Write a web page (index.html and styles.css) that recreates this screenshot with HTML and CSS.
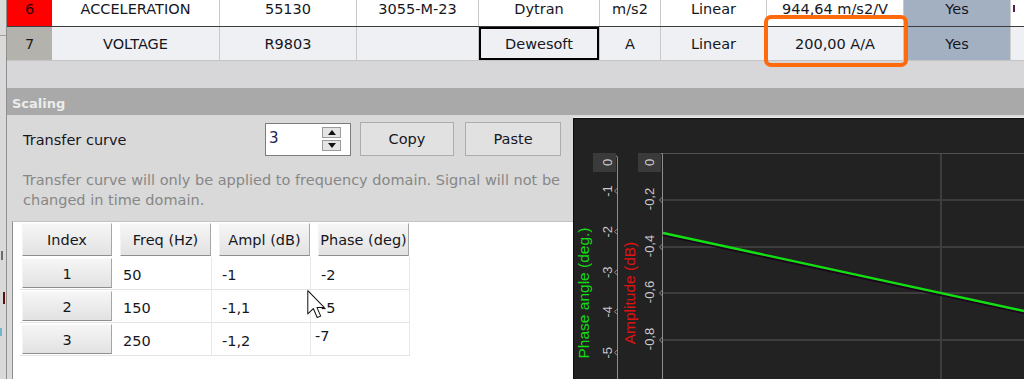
FILE: index.html
```html
<!DOCTYPE html>
<html lang="en">
<head>
<meta charset="utf-8">
<title>Scaling</title>
<link rel="stylesheet" href="styles.css">
</head>
<body>
<div class="screen">
  <div class="backdrop">
    <span class="bk-line"></span>
    <span class="bk-frag frag-a"></span>
    <span class="bk-frag frag-b"></span>
    <span class="bk-frag frag-c"></span>
  </div>
  <div class="main">
    <div class="channels">
      <div class="row row-6">
        <div class="cell num-red">6</div>
        <div class="cell">ACCELERATION</div>
        <div class="cell">55130</div>
        <div class="cell">3055-M-23</div>
        <div class="cell">Dytran</div>
        <div class="cell">m/s2</div>
        <div class="cell">Linear</div>
        <div class="cell">944,64 m/s2/V</div>
        <div class="cell cell-yes">Yes</div>
        <div class="cell cell-rest"><span class="stem"></span></div>
      </div>
      <div class="row row-7">
        <div class="cell num-gray">7</div>
        <div class="cell">VOLTAGE</div>
        <div class="cell">R9803</div>
        <div class="cell"></div>
        <div class="cell cell-focus">Dewesoft</div>
        <div class="cell">A</div>
        <div class="cell">Linear</div>
        <div class="cell">200,00 A/A</div>
        <div class="cell cell-yes">Yes</div>
        <div class="cell cell-rest"></div>
      </div>
    </div>
    <div class="gap"></div>
    <div class="section-head">Scaling</div>
    <div class="section-body">
      <div class="left-pane">
        <div class="controls">
          <span class="label">Transfer curve</span>
          <div class="spin">
            <span class="spin-value">3</span>
            <span class="spin-btns">
              <span class="spin-btn"><span class="tri-up"></span></span>
              <span class="spin-btn"><span class="tri-down"></span></span>
            </span>
          </div>
          <button class="btn btn-copy">Copy</button>
          <button class="btn btn-paste">Paste</button>
        </div>
        <p class="note">Transfer curve will only be applied to frequency domain. Signal will not be<br>changed in time domain.</p>
        <div class="table-box">
          <div class="curve-table">
            <div class="th th-index">Index</div>
            <div class="th">Freq (Hz)</div>
            <div class="th">Ampl (dB)</div>
            <div class="th">Phase (deg)</div>

            <div class="td-index"><span class="rowbtn">1</span></div>
            <div class="td">50</div>
            <div class="td">-1</div>
            <div class="td">-2</div>

            <div class="td-index"><span class="rowbtn">2</span></div>
            <div class="td">150</div>
            <div class="td">-1,1</div>
            <div class="td">-5</div>

            <div class="td-index"><span class="rowbtn">3</span></div>
            <div class="td">250</div>
            <div class="td">-1,2</div>
            <div class="td td-edit">-7</div>
          </div>
        </div>
      </div>
      <div class="chart">
        <svg class="plot" width="450" height="260" viewBox="0 0 450 260">
          <g stroke="#3d3d3d" stroke-width="2">
            <line x1="89" y1="81" x2="450" y2="81"/>
            <line x1="89" y1="128" x2="450" y2="128"/>
            <line x1="89" y1="174" x2="450" y2="174"/>
            <line x1="89" y1="221" x2="450" y2="221"/>
            <line x1="367" y1="35" x2="367" y2="260"/>
          </g>
          <line x1="89" y1="34.5" x2="450" y2="34.5" stroke="#4e4e4e" stroke-width="1"/>
          <g fill="none" stroke="#8e8e8e" stroke-width="1">
            <path d="M86 34.5 H88.5 V260"/>
            <path d="M41 36.5 Q43.5 36.5 43.5 39 V260"/>
            <polyline points="88.5,78 85.5,81 88.5,84"/>
            <polyline points="88.5,125 85.5,128 88.5,131"/>
            <polyline points="88.5,171 85.5,174 88.5,177"/>
            <polyline points="88.5,218 85.5,221 88.5,224"/>
            <polyline points="43.5,69 40.5,72 43.5,75"/>
            <polyline points="43.5,109.7 40.5,112.7 43.5,115.7"/>
            <polyline points="43.5,150.3 40.5,153.3 43.5,156.3"/>
            <polyline points="43.5,189.7 40.5,192.7 43.5,195.7"/>
            <polyline points="43.5,230.7 40.5,233.7 43.5,236.7"/>
          </g>
          <rect x="19" y="34" width="23" height="19" fill="#3a3a3a"/>
          <rect x="64" y="34" width="23" height="19" fill="#3a3a3a"/>
          <g class="tick" text-anchor="middle" dominant-baseline="central">
            <text transform="translate(33,43.5) rotate(-90)">0</text>
            <text transform="translate(33,72) rotate(-90)">-1</text>
            <text transform="translate(33,112.7) rotate(-90)">-2</text>
            <text transform="translate(33,153.3) rotate(-90)">-3</text>
            <text transform="translate(33,192.7) rotate(-90)">-4</text>
            <text transform="translate(33,233.7) rotate(-90)">-5</text>
            <text transform="translate(75.5,43.5) rotate(-90)">0</text>
            <text transform="translate(75.5,80) rotate(-90)">-0,2</text>
            <text transform="translate(75.5,127) rotate(-90)">-0,4</text>
            <text transform="translate(75.5,173) rotate(-90)">-0,6</text>
            <text transform="translate(75.5,220) rotate(-90)">-0,8</text>
          </g>
          <g class="axis-title" text-anchor="middle" dominant-baseline="central">
            <text class="t-phase" transform="translate(9,174) rotate(-90)">Phase angle (deg.)</text>
            <text class="t-amp" transform="translate(55,174) rotate(-90)">Amplitude (dB)</text>
          </g>
          <line x1="89" y1="115.5" x2="450" y2="193.5" stroke="#1c041c" stroke-width="3"/>
          <line x1="89" y1="114" x2="450" y2="192" stroke="#12e012" stroke-width="2.4"/>
        </svg>
      </div>
    </div>
  </div>
  <div class="highlight"></div>
  <svg class="cursor" width="19" height="29" viewBox="0 0 13 20">
    <path d="M0.5 0.5 L0.5 16.5 L4.3 12.8 L7 19 L9.4 18 L6.8 12 L11.8 12 Z" fill="#ffffff" fill-opacity="0.85" stroke="#111111" stroke-width="0.7" stroke-linejoin="round"/>
  </svg>
</div>
</body>
</html>
```

FILE: styles.css
```css
* { box-sizing: border-box; }

html, body {
  margin: 0;
  padding: 0;
}

body {
  width: 1024px;
  height: 379px;
  overflow: hidden;
  background: #d7d6d9;
  font-family: "DejaVu Sans", Verdana, sans-serif;
  font-size: 14.5px;
  color: #16161e;
}

.screen {
  position: relative;
  width: 1024px;
  height: 379px;
  display: flex;
  overflow: hidden;
}

/* window behind, at the very left */
.backdrop {
  flex: 0 0 7px;
  background: #d9d9d9;
  border-right: 1px solid #8f8f8f;
  display: flex;
  flex-direction: column;
}

.bk-line {
  height: 1px;
  background: #a0a0a0;
  margin-top: 35px;
}

.bk-frag {
  display: block;
  width: 3px;
}

.frag-a {
  height: 9px;
  margin-top: 215px;
  background: #6d6d6d;
  width: 2px;
  margin-left: 1px;
}

.frag-b {
  height: 12px;
  margin-top: 32px;
  background: #5a1010;
  margin-left: 3px;
  width: 2px;
}

.frag-c {
  height: 8px;
  margin-top: 24px;
  background: #6fb6c8;
  width: 2px;
}

.main {
  flex: 1;
  min-width: 0;
  display: flex;
  flex-direction: column;
}

/* channel grid */
.row {
  display: grid;
  grid-template-columns: 45px 168px 137px 122px 121px 61px 106px 137px 107px 1fr;
}

.row-6 {
  height: 35px;
  margin-top: -8px;
  background: #ffffff;
  border-bottom: 1px solid #3c3c3c;
}

.row-7 {
  height: 34px;
  background: #eef0f3;
  border-bottom: 1px solid #c4c4c4;
}

.cell {
  display: flex;
  align-items: center;
  justify-content: center;
  border-right: 1px solid #c9c9c9;
  white-space: nowrap;
  overflow: hidden;
}

.num-red {
  background: #ff0000;
  color: #2a0606;
  border-right: none;
}

.num-gray {
  background: #b4b2ac;
  color: #1a1a1a;
  border-right: none;
}

.cell-yes {
  background: #a3b0c2;
  border-right: 1px solid #d0d0d0;
}

.cell-focus {
  box-shadow: inset 0 0 0 2px #000000;
}

.cell-rest {
  justify-content: flex-start;
  border-right: none;
  align-items: flex-start;
  padding: 13px 0 0 2px;
}

.stem {
  display: block;
  width: 2px;
  height: 7px;
  background: #5c1a52;
}

.gap {
  height: 27px;
  background: #d7d6d9;
}

.section-head {
  height: 27px;
  background: #a9a9a9;
  color: #ececec;
  font-weight: bold;
  font-size: 13px;
  padding: 3px 0 0 5px;
  display: flex;
  align-items: center;
}

.section-body {
  flex: 1;
  display: flex;
  background: #d9d9d9;
  min-height: 0;
}

.left-pane {
  flex: 0 0 566px;
  display: flex;
  flex-direction: column;
}

.controls {
  margin-top: 7px;
  height: 34px;
  display: flex;
  align-items: center;
}

.label {
  flex: 0 0 258px;
  padding-left: 16px;
  padding-top: 1px;
}

.spin {
  width: 86px;
  height: 33px;
  background: #ffffff;
  border: 1px solid #7c7c7c;
  display: flex;
  align-items: center;
  padding-left: 3px;
}

.spin-value {
  flex: 1;
  font-size: 15px;
  color: #1c2350;
  padding-bottom: 2px;
}

.spin-btns {
  display: flex;
  flex-direction: column;
  gap: 2px;
  margin-right: 9px;
}

.spin-btn {
  width: 19px;
  height: 11px;
  background: #e4e4e4;
  border: 1px solid #9a9a9a;
  display: flex;
  align-items: center;
  justify-content: center;
}

.tri-up {
  width: 0;
  height: 0;
  border-left: 4px solid transparent;
  border-right: 4px solid transparent;
  border-bottom: 5px solid #111111;
}

.tri-down {
  width: 0;
  height: 0;
  border-left: 4px solid transparent;
  border-right: 4px solid transparent;
  border-top: 5px solid #111111;
}

.btn {
  height: 34px;
  background: #e1e1e1;
  border: 1px solid #adadad;
  font-family: "DejaVu Sans", Verdana, sans-serif;
  font-size: 14.5px;
  color: #16161e;
  padding: 0;
}

.btn-copy {
  width: 94px;
  margin-left: 9px;
}

.btn-paste {
  width: 96px;
  margin-left: 11px;
}

.note {
  margin: 14px 0 0;
  padding-left: 16px;
  line-height: 20px;
  color: #878787;
  white-space: nowrap;
}

.table-box {
  flex: 1;
  margin: 11px 0 0 5px;
  background: #ffffff;
  border-left: 1px solid #8f8f8f;
  border-top: 1px solid #c4c4c4;
  padding-left: 7px;
}

.curve-table {
  display: grid;
  grid-template-columns: 93px 99px 99px 99px;
  grid-template-rows: 35px 33px 33px 33px;
}

.th,
.rowbtn {
  display: flex;
  align-items: center;
  justify-content: center;
  background: linear-gradient(#f6f6f6, #e2e2e2);
  border-top: 1px solid #fbfbfb;
  border-left: 1px solid #f3f3f3;
  border-right: 1px solid #a6a6a6;
  border-bottom: 1px solid #8e8e8e;
  white-space: nowrap;
}

.th {
  margin: 1px 1px 1px 7px;
  padding-top: 1px;
}

.th-index {
  margin-left: 2px;
}

.td-index {
  display: flex;
  padding: 1px 1px 1px 2px;
  border-bottom: 1px solid #e4e4e4;
}

.rowbtn {
  flex: 1;
  padding-top: 2px;
}

.td {
  display: flex;
  align-items: center;
  padding: 3px 0 0 10px;
  border-right: 1px solid #e8e8e8;
  border-bottom: 1px solid #e4e4e4;
}

.td-edit {
  padding: 0 0 6px 4px;
}

.chart {
  flex: 1;
  margin-top: 3px;
  background: #222222;
  border-top: 1px solid #0c0c0c;
  border-left: 1px solid #0c0c0c;
  box-shadow: 0 -1px 0 #efefef;
  overflow: hidden;
}

.plot {
  display: block;
}

.tick {
  font-family: "Liberation Sans", Arial, sans-serif;
  font-size: 13px;
  fill: #c9c9c9;
}

.axis-title {
  font-family: "Liberation Sans", Arial, sans-serif;
  font-size: 15.5px;
}

.t-phase { fill: #14dc14; }
.t-amp { fill: #e01212; }

/* overlays */
.highlight {
  position: absolute;
  left: 764px;
  top: 15px;
  width: 144px;
  height: 52px;
  border: 4px solid #ff6a0c;
  border-radius: 7px;
}

.cursor {
  position: absolute;
  left: 307px;
  top: 290px;
}
```
